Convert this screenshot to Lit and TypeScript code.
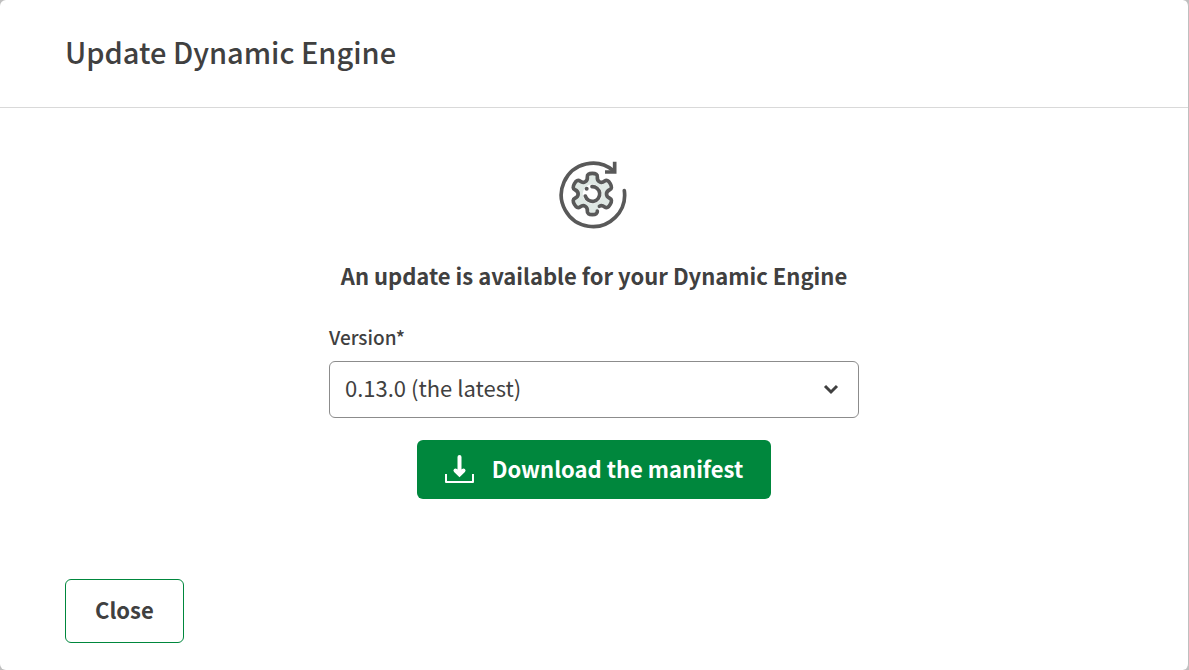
import { LitElement, html, css, svg } from "lit";
import { customElement, state } from "lit/decorators.js";

type Point = [number, number];

/** Smooth six-toothed gear outline around (0, 0). */
function gearPath(closed: boolean): string {
  const tooth: Point[] = [[-14, -41], [-16, -62], [16, -62], [14, -41]];
  const points: Point[] = [];
  for (let i = 0; i < 6; i++) {
    const a = Math.PI + (i * Math.PI) / 3;
    for (const [x, y] of tooth) {
      points.push([x * Math.cos(a) - y * Math.sin(a), x * Math.sin(a) + y * Math.cos(a)]);
    }
  }
  const n = points.length;
  const mid = (i: number) => {
    const p = points[i % n];
    const q = points[(i + 1) % n];
    return `${((p[0] + q[0]) / 2).toFixed(1)} ${((p[1] + q[1]) / 2).toFixed(1)}`;
  };
  let d = `M${mid(0)}`;
  for (let i = 1; i < n; i++) {
    d += `Q${points[i][0].toFixed(1)} ${points[i][1].toFixed(1)} ${mid(i)}`;
  }
  return closed ? d + "Z" : d;
}

@customElement("update-icon")
class UpdateIcon extends LitElement {
  static styles = css`
    :host { display: block; }
    .icon { display: block; width: 70px; height: 70px; }
    .line { fill: none; stroke: #595959; stroke-width: 11; stroke-linecap: round; }
    .arrow { stroke-linecap: butt; stroke-linejoin: miter; }
    .body { fill: #dfe8e4; }
    .hub { fill: #fff; }
    .dot { fill: #595959; }
  `;
  render() {
    return html`<svg class="icon" viewBox="43 32 210 210" aria-hidden="true">
      ${svg`
        <path class="line" d="M239 124A95 95 0 1 1 206 64"/>
        <path class="line arrow" d="M210 37V68H181"/>
        <g transform="translate(143 134)">
          <path class="body" d=${gearPath(true)}/>
          <circle class="hub" r="29"/>
          <path class="line" d=${gearPath(false)}/>
          <path class="line" d="M-1 -22A22 22 0 1 1 -21 6"/>
          <circle class="dot" cx="-17" cy="-16" r="6"/>
        </g>`}
    </svg>`;
  }
}

@customElement("app-root")
class AppRoot extends LitElement {
  static styles = css`
    :host {
      display: block;
      background: #bfbfbf;
      color: #404040;
      font-family: "Source Sans Pro", "Noto Sans CJK JP", sans-serif;
      font-weight: 700;
    }
    * { box-sizing: border-box; }
    .dialog {
      display: flex;
      flex-direction: column;
      min-height: 100vh;
      background: #fff;
      border-right: 1px solid #bfbfbf;
      border-radius: 6px;
    }
    .header { padding: 30px 65px 34px; border-bottom: 1px solid #d9d9d9; }
    .title { margin: 0; font-size: 29px; line-height: 43px; font-weight: 500; }
    .content {
      flex: 1;
      display: flex;
      flex-direction: column;
      align-items: center;
      padding: 52px 65px 32px;
    }
    .message { margin: 29px 0 32px; font-size: 22px; line-height: 32px; font-weight: 700; text-align: center; }
    .field { display: flex; flex-direction: column; width: 100%; max-width: 530px; gap: 10px; }
    .label { font-size: 19px; line-height: 28px; font-weight: 500; }
    .picker { display: grid; align-items: center; }
    .select {
      grid-area: 1 / 1;
      appearance: none;
      width: 100%;
      height: 57px;
      padding: 0 48px 6px 15px;
      border: 1px solid #8c8c8c;
      border-radius: 6px;
      background: #fff;
      color: inherit;
      font: inherit;
      font-size: 22px;
      font-weight: 400;
    }
    .chevron {
      grid-area: 1 / 1;
      justify-self: end;
      width: 16px;
      height: 12px;
      margin: 0 20px 2px 0;
      pointer-events: none;
    }
    .button {
      display: flex;
      align-items: center;
      border-radius: 6px;
      font: inherit;
      font-size: 22px;
      line-height: 32px;
      cursor: pointer;
    }
    .primary {
      gap: 18px;
      margin-top: 22px;
      padding: 12px 28px 15px;
      border: 0;
      background: #00873d;
      color: #fff;
    }
    .download { width: 29px; height: 32px; }
    .footer { display: flex; padding: 0 65px 27px; }
    .secondary { padding: 13px 29px 17px; border: 1px solid #00873d; background: #fff; color: inherit; }
  `;

  @state() private versions = ["0.13.0 (the latest)"];

  render() {
    return html`
      <section class="dialog" role="dialog" aria-labelledby="title">
        <header class="header"><h1 class="title" id="title">Update Dynamic Engine</h1></header>
        <main class="content">
          <update-icon></update-icon>
          <h2 class="message">An update is available for your Dynamic Engine</h2>
          <div class="field">
            <label class="label" for="version">Version*</label>
            <div class="picker">
              <select class="select" id="version" required>
                ${this.versions.map((v) => html`<option>${v}</option>`)}
              </select>
              <svg class="chevron" viewBox="0 0 16 12" aria-hidden="true">
                <path d="M2 3L8 9L14 3" fill="none" stroke="#404040" stroke-width="3"/>
              </svg>
            </div>
          </div>
          <button class="button primary" type="button">
            <svg class="download" viewBox="0 0 29 32" aria-hidden="true">
              <path d="M1 22V30H28V22" fill="none" stroke="#fff" stroke-width="2" stroke-linejoin="round"/>
              <path d="M14.5 5V22M10.5 18.5L14.5 22.5L18.5 18.5" fill="none" stroke="#fff" stroke-width="4" stroke-linecap="round"/>
            </svg>
            Download the manifest
          </button>
        </main>
        <footer class="footer"><button class="button secondary" type="button">Close</button></footer>
      </section>
    `;
  }
}
